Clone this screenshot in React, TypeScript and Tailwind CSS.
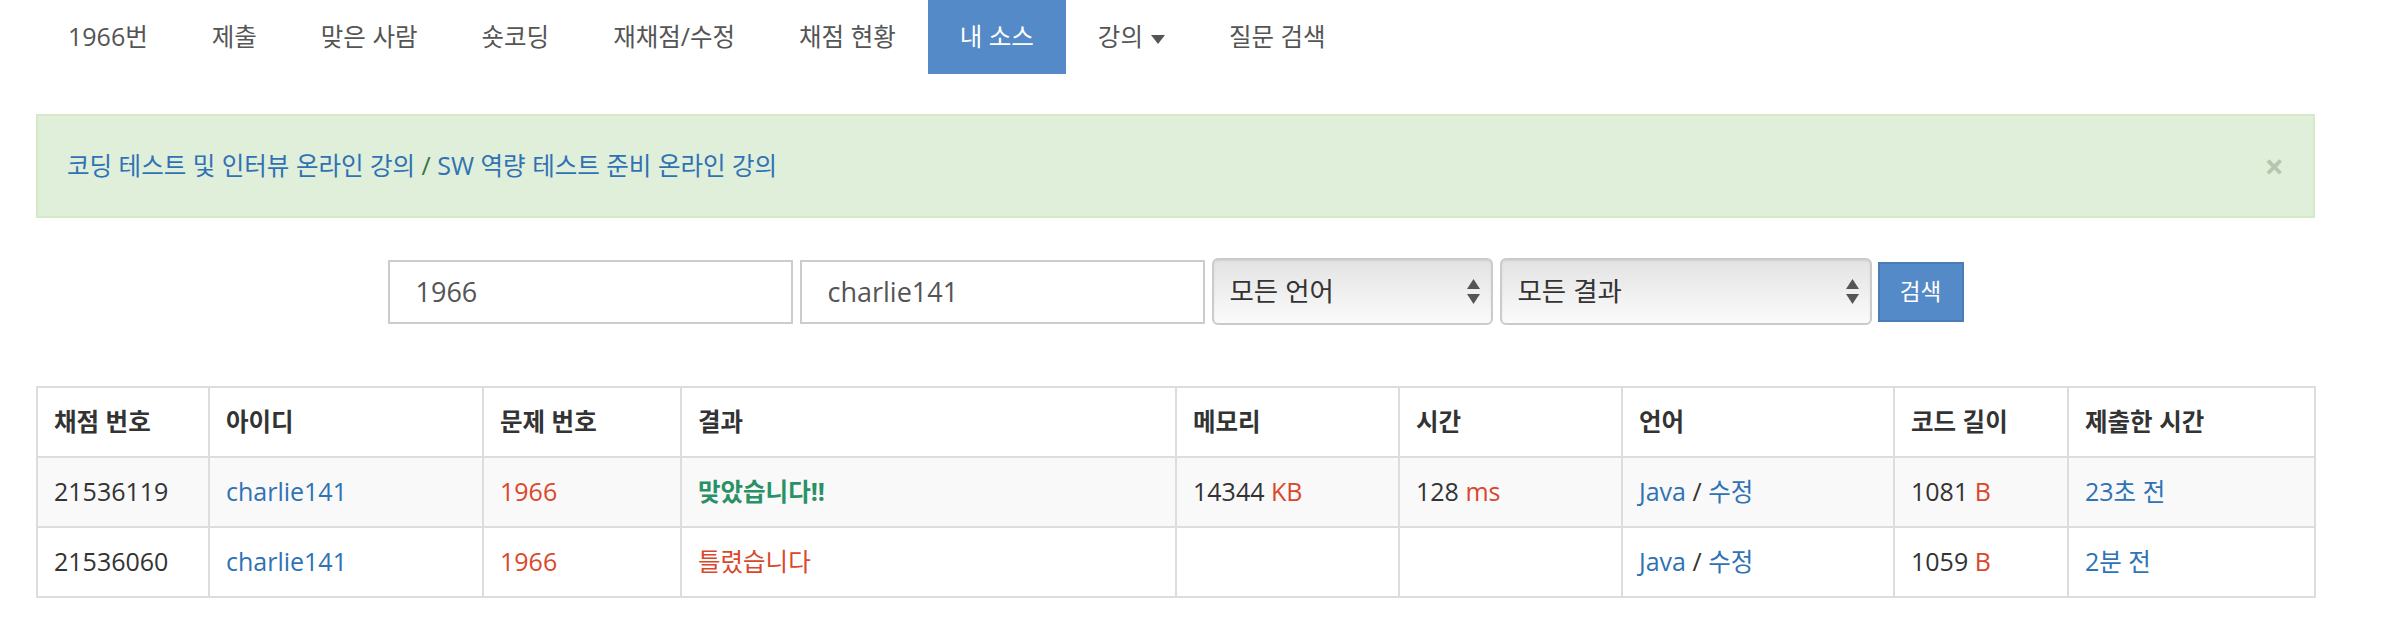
import type { ReactNode } from "react";

const HANGUL = /([\uac00-\ud7a3]+)/;

// Latin in Open Sans, hangul a touch smaller so it reads like the original system font
function Ko({ children }: { children: string }) {
  return (
    <span>
      {children.split(HANGUL).map((part, i) =>
        i % 2 ? (
          <span key={i} className="text-[0.98em]">
            {part}
          </span>
        ) : (
          part
        )
      )}
    </span>
  );
}

const tabs = ["1966번", "제출", "맞은 사람", "숏코딩", "재채점/수정", "채점 현황", "내 소스", "강의", "질문 검색"];

const columns: Array<{ label: string; width: string }> = [
  { label: "채점 번호", width: "w-[172px]" },
  { label: "아이디", width: "w-[274px]" },
  { label: "문제 번호", width: "w-[198px]" },
  { label: "결과", width: "w-[495px]" },
  { label: "메모리", width: "w-[223px]" },
  { label: "시간", width: "w-[223px]" },
  { label: "언어", width: "w-[272px]" },
  { label: "코드 길이", width: "w-[174px]" },
  { label: "제출한 시간", width: "w-[247px]" },
];

type Row = {
  id: string;
  user: string;
  problem: string;
  result: string;
  accepted: boolean;
  memory?: string;
  time?: string;
  length: string;
  ago: string;
};

const rows: Row[] = [
  { id: "21536119", user: "charlie141", problem: "1966", result: "맞았습니다!!", accepted: true, memory: "14344", time: "128", length: "1081", ago: "23초 전" },
  { id: "21536060", user: "charlie141", problem: "1966", result: "틀렸습니다", accepted: false, length: "1059", ago: "2분 전" },
];

function SelectArrows() {
  return (
    <svg width="13" height="25" viewBox="0 0 13 25" className="shrink-0">
      <path d="M6.5 0 L13 10 L0 10 Z" fill="#555" />
      <path d="M0 15 L13 15 L6.5 25 Z" fill="#555" />
    </svg>
  );
}

function FakeSelect({ label, width }: { label: string; width: string }) {
  return (
    <div
      className={`${width} flex h-[67px] items-center justify-between rounded-[6px] border-2 border-[#cbcbcb] bg-gradient-to-b from-[#e3e3e3] to-[#fbfbfb] pl-[16px] pr-[11px] text-[27px] text-[#333] shadow-[inset_0_1px_2px_rgba(0,0,0,0.08)]`}
    >
      <Ko>{label}</Ko>
      <SelectArrows />
    </div>
  );
}

function Cell({ children }: { children?: ReactNode }) {
  return <td className="h-[70px] border-2 border-[#ddd] px-[16px] align-middle whitespace-nowrap">{children}</td>;
}

export default function App() {
  return (
    <div className="min-h-screen bg-white font-['Open_Sans','Noto_Sans_CJK_KR',sans-serif] text-[#333]">
      <div className="ml-[36px] w-[2279px]">
        <nav className="flex h-[74px] text-[25px] text-[#555]">
          {tabs.map((tab) => {
            const active = tab === "내 소스";
            return (
              <div
                key={tab}
                className={`flex items-center px-[32px] ${active ? "bg-[#548ac7] text-white" : ""}`}
              >
                <Ko>{tab}</Ko>
                {tab === "강의" && (
                  <svg width="14" height="9" viewBox="0 0 14 9" className="ml-[8px] mt-[4px]">
                    <path d="M0 0 L14 0 L7 9 Z" fill="#555" />
                  </svg>
                )}
              </div>
            );
          })}
        </nav>

        <div className="mt-[40px] flex h-[104px] items-center justify-between border-2 border-[#d6e9c6] bg-[#e0efd9] pl-[29px] pr-[29px] text-[25px]">
          <p>
            <a className="text-[#2f72b5]">
              <Ko>코딩 테스트 및 인터뷰 온라인 강의</Ko>
            </a>
            <span className="text-[#3c763d]"> / </span>
            <a className="text-[#2f72b5]">
              <Ko>SW 역량 테스트 준비 온라인 강의</Ko>
            </a>
          </p>
          <span className="text-[34px] font-bold leading-none text-[#b5c5ae]">×</span>
        </div>

        <div className="mt-[40px] flex items-center justify-center gap-[7px]">
          <input
            readOnly
            value="1966"
            className="h-[64px] w-[405px] border-2 border-[#ccc] bg-white px-[26px] text-[27px] text-[#555] outline-none"
          />
          <input
            readOnly
            value="charlie141"
            className="h-[64px] w-[405px] border-2 border-[#ccc] bg-white px-[26px] text-[27px] text-[#555] outline-none"
          />
          <FakeSelect label="모든 언어" width="w-[281px]" />
          <FakeSelect label="모든 결과" width="w-[372px]" />
          <button className="ml-[-1px] h-[60px] w-[86px] border-2 border-[#4a7db8] bg-[#548ac7] text-[23px] text-white">
            <Ko>검색</Ko>
          </button>
        </div>

        <table className="mt-[61px] w-[2279px] table-fixed border-collapse text-[25px]">
          <colgroup>
            {columns.map((col) => (
              <col key={col.label} className={col.width} />
            ))}
          </colgroup>
          <thead>
            <tr>
              {columns.map((col) => (
                <th key={col.label} className="h-[70px] border-2 border-[#ddd] px-[16px] text-left font-bold">
                  <Ko>{col.label}</Ko>
                </th>
              ))}
            </tr>
          </thead>
          <tbody>
            {rows.map((row, index) => (
              <tr key={row.id} className={index === 0 ? "bg-[#f9f9f9]" : "bg-white"}>
                <Cell>{row.id}</Cell>
                <Cell>
                  <a className="text-[#2f72b5]">{row.user}</a>
                </Cell>
                <Cell>
                  <a className="text-[#d9482b]">{row.problem}</a>
                </Cell>
                <Cell>
                  <span className={row.accepted ? "font-bold text-[#2a9167]" : "text-[#d9482b]"}>
                    <Ko>{row.result}</Ko>
                  </span>
                </Cell>
                <Cell>
                  {row.memory && (
                    <>
                      {row.memory} <span className="text-[#d9482b]">KB</span>
                    </>
                  )}
                </Cell>
                <Cell>
                  {row.time && (
                    <>
                      {row.time} <span className="text-[#d9482b]">ms</span>
                    </>
                  )}
                </Cell>
                <Cell>
                  <a className="text-[#2f72b5]">Java</a> / <a className="text-[#2f72b5]"><Ko>수정</Ko></a>
                </Cell>
                <Cell>
                  {row.length} <span className="text-[#d9482b]">B</span>
                </Cell>
                <Cell>
                  <a className="text-[#2f72b5]">
                    <Ko>{row.ago}</Ko>
                  </a>
                </Cell>
              </tr>
            ))}
          </tbody>
        </table>
      </div>
    </div>
  );
}
